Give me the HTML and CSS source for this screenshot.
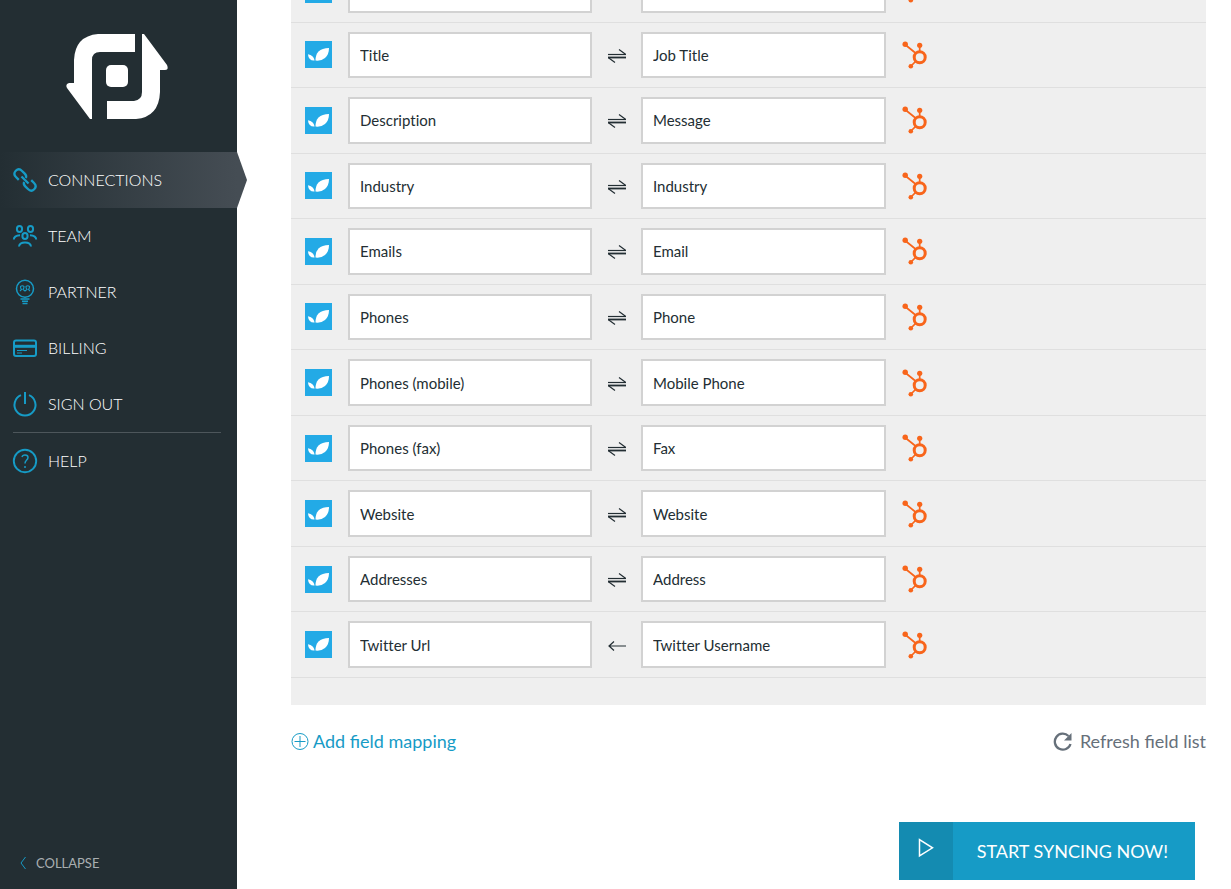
FILE: index.html
```html
<!DOCTYPE html>
<html lang="en">
<head>
<meta charset="utf-8">
<meta name="viewport" content="width=device-width, initial-scale=1">
<title>Field mapping</title>
<link rel="stylesheet" href="styles.css">
</head>
<body>
<svg class="sprite" aria-hidden="true">
  <symbol id="leaf" viewBox="0 0 27 27">
    <rect width="27" height="27" fill="#23aae6"/>
    <path d="M24 7Q17 7 13.500 10.500Q10.500 13.500 10.500 19.500Q16 20.300 20 17Q24 13.500 24 7Z" fill="#fff"/>
    <path d="M3 13.300Q8.500 14 9.600 19.500Q6.500 19.800 4.800 18Q3 16 3 13.300Z" fill="#fff"/>
  </symbol>
  <symbol id="hub" viewBox="0 0 26 28">
    <g fill="none" stroke="#f8651b">
      <circle cx="17.700" cy="16.200" r="5.500" stroke-width="3"/>
      <path d="M3 3.500L13.500 12M17.700 5V11M9 25L13.500 20.500" stroke-width="1.700"/>
    </g>
    <g fill="#f8651b"><circle cx="3.200" cy="3.300" r="2.700"/><circle cx="17.700" cy="4.300" r="2.600"/><circle cx="8.800" cy="25.200" r="2.300"/></g>
  </symbol>
  <symbol id="both" viewBox="0 0 18 16">
    <path d="M0 7.500H18" stroke-width="1.200"/><path d="M0 10.500H18" stroke-width="1.800"/><path d="M11 2.500L17.500 7.200M7 15.500L.5 10.800" stroke-width="1.200"/>
  </symbol>
  <symbol id="left" viewBox="0 0 18 16">
    <path d="M1 9H18M6 4.500L1 9L6 13.500" stroke-width="1.200"/>
  </symbol>
</svg>
<div class="app">
  <aside class="sidebar">
    <svg class="logo" viewBox="0 0 102 86" role="img" aria-label="Logo" fill="#fff">
      <path d="M69 0V18H34Q26 18 26 26V85H24L1 54Q-1 50 3 49H8V26Q9 2 32 0Z"/>
      <path d="M76 0H78L101 31Q103 36 99 36H94V58Q93 83 70 85H41V67H68Q76 66 76 58Z"/>
      <rect x="40" y="31" width="22" height="22" rx="5"/>
    </svg>
    <nav class="nav">
      <a class="nav-link active" href="#connections">
        <svg class="nav-icon" viewBox="0 0 26 26"><g transform="rotate(45 13 13)" stroke-width="2.300"><path d="M8.500 17.300H4.500Q0 17.300 0 13T4.500 8.700H8Q11.500 8.700 12.200 11M17.500 8.700H21.500Q26 8.700 26 13T21.500 17.300H18Q14.500 17.300 13.800 15M8 13H18"/></g></svg>
        <span class="nav-text">Connections</span></a>
      <a class="nav-link" href="#team">
        <svg class="nav-icon" viewBox="0 0 26 26" stroke-width="2"><ellipse cx="7.500" cy="6" rx="2.600" ry="3"/><ellipse cx="18.500" cy="6" rx="2.600" ry="3"/><ellipse cx="13" cy="13" rx="2.600" ry="3"/><path d="M1.800 16.500Q2 12.500 8 12.300M24.200 16.500Q24 12.500 18 12.300M7 23.500Q7.500 19.500 13 19.500T19 23.500"/></svg>
        <span class="nav-text">Team</span></a>
      <a class="nav-link" href="#partner">
        <svg class="nav-icon" viewBox="0 0 26 26" stroke-width="1.500"><circle cx="13" cy="9.700" r="8.500"/><path d="M8.500 20H17.500M10 22.300H16M10.500 24.500H15.500"/><path stroke-width="1.100" d="M8 12Q9 11 9.500 10.500Q8.300 9 8.500 7.500Q10.300 6 12 7.500Q12.200 9 11 10.500L13 12L15 10.500Q13.800 9 14 7.500Q15.700 6 17.500 7.500Q17.700 9 16.500 10.500L18 12"/></svg>
        <span class="nav-text">Partner</span></a>
      <a class="nav-link" href="#billing">
        <svg class="nav-icon" viewBox="0 0 26 26" stroke-width="2"><rect x="2" y="5.500" width="22" height="15.500" rx="2"/><path d="M2 11.300H24" stroke-width="3"/><path d="M5 15.500H15M5 18H10" stroke-width="1"/></svg>
        <span class="nav-text">Billing</span></a>
      <a class="nav-link" href="#signout">
        <svg class="nav-icon" viewBox="0 0 26 26" stroke-width="2"><path d="M9 4.200A10.500 10.500 0 1 0 17 4.200M13 1V13"/></svg>
        <span class="nav-text">Sign out</span></a>
      <hr class="nav-rule">
      <a class="nav-link" href="#help">
        <svg class="nav-icon" viewBox="0 0 26 26" stroke-width="1.900"><circle cx="13" cy="13" r="11.200"/><path stroke-width="1.500" d="M10 9Q10.500 7 13 7Q16 7 16 9.500Q16 11 14.500 12.200Q13 13.500 13 15.500M13 18V20"/></svg>
        <span class="nav-text">Help</span></a>
    </nav>
    <button class="collapse" type="button">
      <svg class="chevron" viewBox="0 0 6 14"><path d="M5.500 1L1 7L5.500 13"/></svg>Collapse</button>
  </aside>

  <main class="content">
    <section class="panel">
      <div class="rows">
        <div class="row"><svg class="leaf"><use href="#leaf"/></svg><input class="field" aria-label="Source field" value=""><svg class="arrow"><use href="#both"/></svg><input class="field" aria-label="Target field" value=""><svg class="hub"><use href="#hub"/></svg></div>
        <div class="row"><svg class="leaf"><use href="#leaf"/></svg><input class="field" aria-label="Source field" value="Title"><svg class="arrow"><use href="#both"/></svg><input class="field" aria-label="Target field" value="Job Title"><svg class="hub"><use href="#hub"/></svg></div>
        <div class="row"><svg class="leaf"><use href="#leaf"/></svg><input class="field" aria-label="Source field" value="Description"><svg class="arrow"><use href="#both"/></svg><input class="field" aria-label="Target field" value="Message"><svg class="hub"><use href="#hub"/></svg></div>
        <div class="row"><svg class="leaf"><use href="#leaf"/></svg><input class="field" aria-label="Source field" value="Industry"><svg class="arrow"><use href="#both"/></svg><input class="field" aria-label="Target field" value="Industry"><svg class="hub"><use href="#hub"/></svg></div>
        <div class="row"><svg class="leaf"><use href="#leaf"/></svg><input class="field" aria-label="Source field" value="Emails"><svg class="arrow"><use href="#both"/></svg><input class="field" aria-label="Target field" value="Email"><svg class="hub"><use href="#hub"/></svg></div>
        <div class="row"><svg class="leaf"><use href="#leaf"/></svg><input class="field" aria-label="Source field" value="Phones"><svg class="arrow"><use href="#both"/></svg><input class="field" aria-label="Target field" value="Phone"><svg class="hub"><use href="#hub"/></svg></div>
        <div class="row"><svg class="leaf"><use href="#leaf"/></svg><input class="field" aria-label="Source field" value="Phones (mobile)"><svg class="arrow"><use href="#both"/></svg><input class="field" aria-label="Target field" value="Mobile Phone"><svg class="hub"><use href="#hub"/></svg></div>
        <div class="row"><svg class="leaf"><use href="#leaf"/></svg><input class="field" aria-label="Source field" value="Phones (fax)"><svg class="arrow"><use href="#both"/></svg><input class="field" aria-label="Target field" value="Fax"><svg class="hub"><use href="#hub"/></svg></div>
        <div class="row"><svg class="leaf"><use href="#leaf"/></svg><input class="field" aria-label="Source field" value="Website"><svg class="arrow"><use href="#both"/></svg><input class="field" aria-label="Target field" value="Website"><svg class="hub"><use href="#hub"/></svg></div>
        <div class="row"><svg class="leaf"><use href="#leaf"/></svg><input class="field" aria-label="Source field" value="Addresses"><svg class="arrow"><use href="#both"/></svg><input class="field" aria-label="Target field" value="Address"><svg class="hub"><use href="#hub"/></svg></div>
        <div class="row"><svg class="leaf"><use href="#leaf"/></svg><input class="field" aria-label="Source field" value="Twitter Url"><svg class="arrow"><use href="#left"/></svg><input class="field" aria-label="Target field" value="Twitter Username"><svg class="hub"><use href="#hub"/></svg></div>
      </div>
    </section>
    <div class="tools">
      <button class="tool add" type="button"><svg class="plus" viewBox="0 0 18 18"><circle cx="9" cy="8.500" r="8"/><path d="M9 3V14M3.500 8.500H14.500"/></svg>Add field mapping</button>
      <button class="tool refresh" type="button"><svg class="reload" viewBox="0 0 20 20"><path d="M17.500 12A8 8 0 1 1 15.500 4" fill="none" stroke="#66707a" stroke-width="2.300"/><path d="M18.500 1V8.500H11Z" fill="#66707a"/></svg>Refresh field list</button>
    </div>
    <button class="start" type="button"><span class="start-icon"><svg class="play" viewBox="0 0 16 20"><path d="M1.500 1.500V18L14.500 9.800Z"/></svg></span><span class="start-text">Start syncing now!</span></button>
  </main>
</div>
</body>
</html>
```
FILE: styles.css
```css
* { box-sizing: border-box; }
body { margin: 0; font-family: Lato, "Open Sans", sans-serif; color: #232e33; background: #fff; }
button { margin: 0; padding: 0; border: 0; background: none; font: inherit; cursor: pointer; }
.sprite { position: absolute; width: 0; height: 0; }
.app { display: flex; height: 100vh; }

.sidebar { flex: 0 0 237px; display: flex; flex-direction: column; background: #232e33; }
.logo { width: 102px; height: 86px; margin: 34px auto 32px 66px; }
.nav { display: flex; flex-direction: column; }
.nav-link { position: relative; display: flex; align-items: center; gap: 10px; height: 56px; padding-left: 12px; color: #fff; font-size: 16px; font-weight: 300; text-transform: uppercase; text-decoration: none; }
.nav-text { padding-bottom: 2px; }
.nav-icon { width: 26px; height: 26px; fill: none; stroke: #169bc6; overflow: visible; }
.active { background: linear-gradient(90deg, #232e33, #454d54); }
.active::after { content: ""; position: absolute; left: 100%; top: 0; width: 10px; height: 100%; background: #454d54; clip-path: polygon(0 0, 100% 50%, 0 100%); }
.nav-rule { width: auto; height: 1px; margin: 0 16px 0 13px; border: 0; background: #4d565b; }
.collapse { display: flex; align-items: center; gap: 10px; margin: auto 0 16px 20px; color: #a9aeb1; font-size: 13px; line-height: 20px; text-transform: uppercase; }
.chevron { width: 6px; height: 14px; fill: none; stroke: #169bc6; }

.content { flex: 1; min-width: 0; display: flex; flex-direction: column; justify-content: flex-end; overflow: hidden; padding: 0 25px 9px 54px; }
.panel { flex: none; background: #efefef; padding-bottom: 27px; }
.rows { display: grid; grid-auto-rows: 1fr; min-height: 721px; }
.row { display: grid; grid-template-columns: 43px 244px 49px 245px 42px; align-items: center; padding: 9px 14px; border-bottom: 1px solid #dfdfdf; }
.field { align-self: stretch; width: 100%; min-width: 0; padding: 0 10px; border: 2px solid #d2d2d2; border-radius: 0; background: #fff; color: #232e33; font: 15px Lato, "Open Sans", sans-serif; font-variant-ligatures: none; }
.leaf { width: 27px; height: 27px; }
.arrow { width: 18px; height: 16px; justify-self: center; fill: none; stroke: #232e33; }
.hub { width: 26px; height: 28px; justify-self: end; }

.tools { display: flex; justify-content: space-between; padding: 24px 0 68px; }
.tool { display: flex; align-items: center; font-size: 18px; line-height: 25px; }
.add { gap: 4px; color: #169bc6; }
.refresh { gap: 7px; color: #66707a; }
.plus { width: 18px; height: 18px; fill: none; stroke: #169bc6; }
.reload { width: 20px; height: 20px; }
.start { flex: none; display: flex; align-self: flex-end; margin-right: 11px; background: #169bc6; color: #fff; font-size: 18px; line-height: 58px; text-transform: uppercase; }
.start-icon { display: flex; align-items: center; justify-content: center; width: 54px; height: 58px; padding-bottom: 6px; background: #148bb1; }
.play { width: 16px; height: 20px; fill: none; stroke: #fff; stroke-width: 1.5; }
.start-text { padding: 0 27px 0 24px; }
```
